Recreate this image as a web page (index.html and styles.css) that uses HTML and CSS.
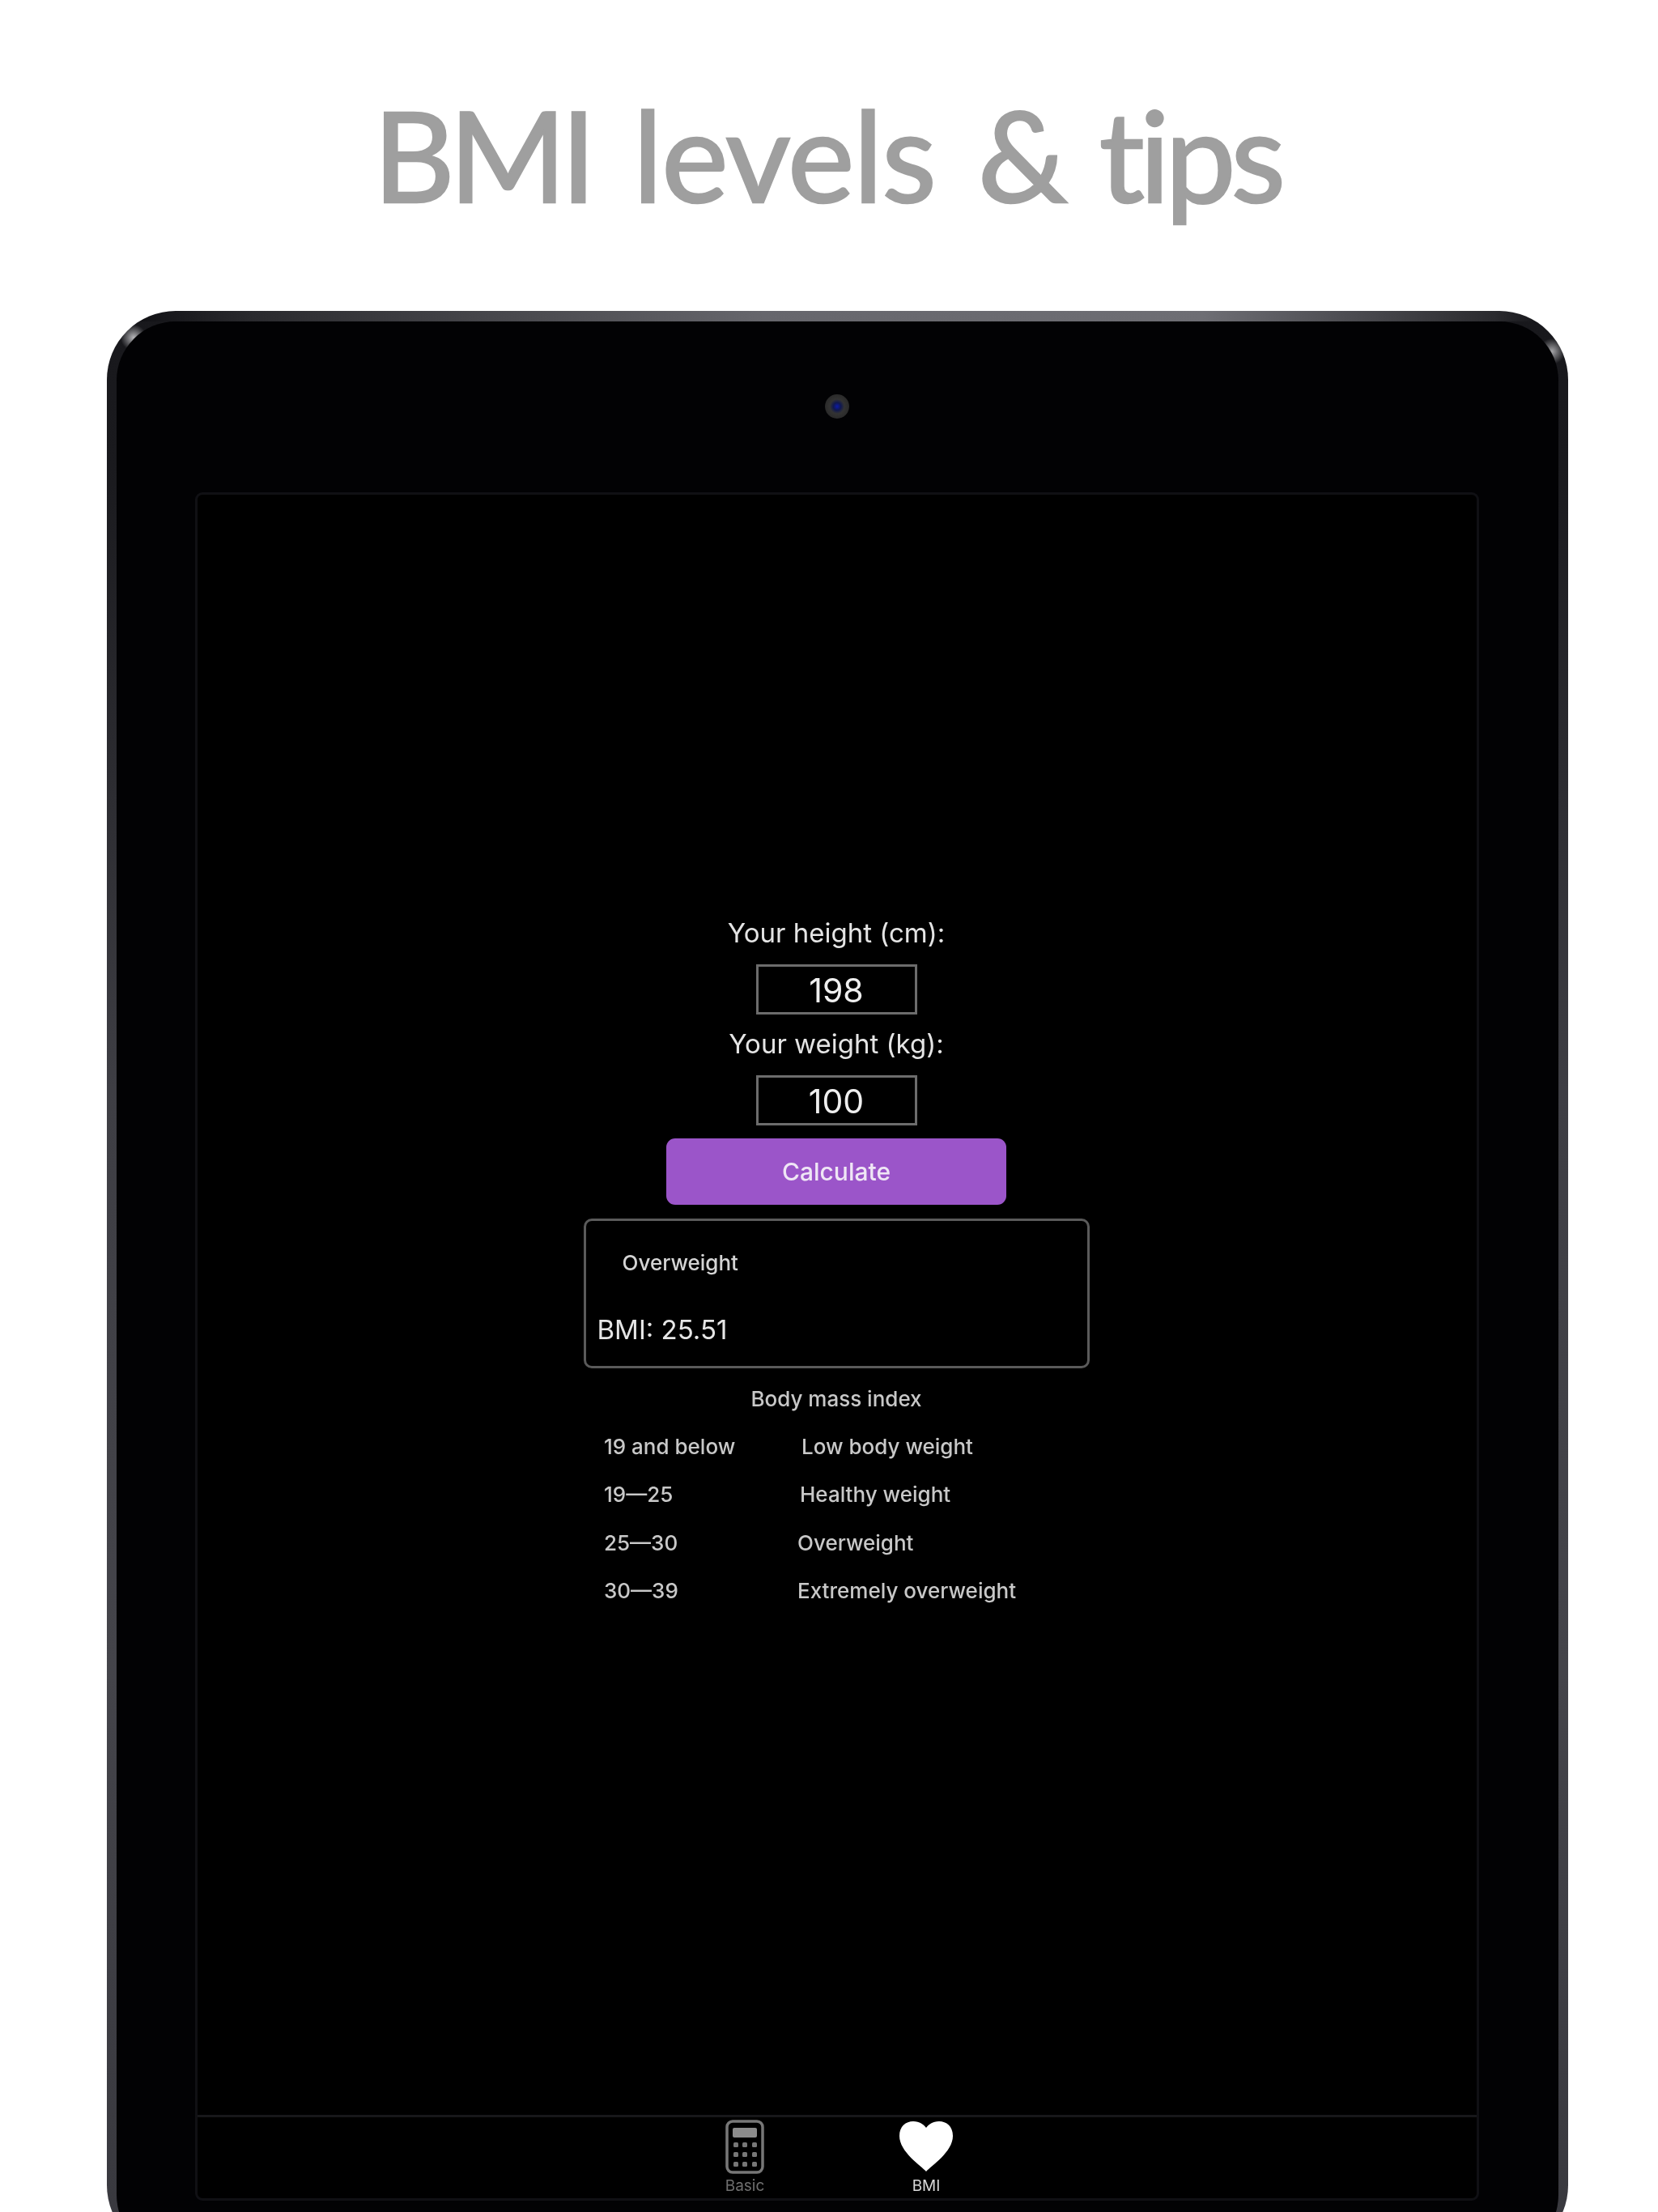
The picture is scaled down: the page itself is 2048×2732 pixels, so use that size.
FILE: index.html
```html
<!DOCTYPE html>
<html lang="en">
<head>
<meta charset="utf-8">
<title>BMI levels &amp; tips</title>
<link rel="stylesheet" href="styles.css">
</head>
<body>
<header class="promo"><h1 class="promo-title"><span class="promo-bmi">BMI</span> levels &amp; <span class="promo-tips">tips</span></h1></header>
<div class="device">
  <div class="device-face">
    <div class="camera"></div>
    <div class="screen">
      <main class="app">
        <label class="field-label">Your height (cm):</label>
        <div class="field-input">198</div>
        <label class="field-label field-label-next">Your weight (kg):</label>
        <div class="field-input">100</div>
        <button class="calc-btn" type="button">Calculate</button>
        <section class="result">
          <div class="result-status">Overweight</div>
          <div class="result-value">BMI: 25.51</div>
        </section>
        <h2 class="index-title">Body mass index</h2>
        <div class="index-table">
          <div class="index-row"><span class="index-range">19 and below</span><span class="index-name">Low body weight</span></div>
          <div class="index-row"><span class="index-range">19—25</span><span class="index-name index-name-b">Healthy weight</span></div>
          <div class="index-row"><span class="index-range">25—30</span><span class="index-name index-name-c">Overweight</span></div>
          <div class="index-row"><span class="index-range">30—39</span><span class="index-name index-name-c">Extremely overweight</span></div>
        </div>
      </main>
      <nav class="tabbar">
        <div class="tab">
          <svg class="tab-icon" width="48" height="67" viewBox="0 0 48 67" aria-hidden="true">
            <rect x="2" y="2" width="44" height="63" rx="7" fill="none" stroke="#777" stroke-width="3.5"/>
            <rect x="9" y="10" width="30" height="12" rx="2" fill="#8c8c8c"/>
            <g fill="#777">
              <rect x="10" y="28" width="6" height="6" rx="1.5"/><rect x="21" y="28" width="6" height="6" rx="1.5"/><rect x="33" y="28" width="6" height="6" rx="1.5"/>
              <rect x="10" y="40" width="6" height="6" rx="1.5"/><rect x="21" y="40" width="6" height="6" rx="1.5"/><rect x="33" y="40" width="6" height="6" rx="1.5"/>
              <rect x="10" y="52" width="6" height="6" rx="1.5"/><rect x="21" y="52" width="6" height="6" rx="1.5"/><rect x="33" y="52" width="6" height="6" rx="1.5"/>
            </g>
          </svg>
          <span class="tab-label">Basic</span>
        </div>
        <div class="tab tab-active">
          <svg class="tab-icon" width="66" height="67" viewBox="0 0 66 67" aria-hidden="true">
            <path d="M33 64C27 57 0 40 0 20C0 8 8 2 17 2C25 2 30 6 33 10C36 6 41 2 49 2C58 2 66 8 66 20C66 40 39 57 33 64Z" fill="#fff"/>
          </svg>
          <span class="tab-label">BMI</span>
        </div>
      </nav>
    </div>
  </div>
</div>
</body>
</html>
```

FILE: styles.css
```css
html, body {
  margin: 0;
  padding: 0;
  background: #fff;
  height: 2732px;
  overflow: hidden;
}

body {
  font-family: Inter, "Liberation Sans", sans-serif;
}

.promo {
  height: 384px;
  box-sizing: border-box;
  padding-top: 95px;
  padding-left: 461px;
}

.promo-title {
  margin: 0;
  font-family: Lato, "Liberation Sans", sans-serif;
  font-weight: 400;
  font-size: 156px;
  line-height: 190px;
  letter-spacing: -1.5px;
  word-spacing: 14px;
  -webkit-text-stroke: 2.5px #9f9f9f;
  color: #9f9f9f;
  white-space: nowrap;
}

.promo-bmi {
  letter-spacing: -7px;
}

.promo-tips {
  margin-left: -12px;
  letter-spacing: -6px;
}

.device {
  position: relative;
  box-sizing: border-box;
  width: 1805px;
  height: 2400px;
  margin-left: 132px;
  padding: 13px 12px 0;
  border-radius: 85px;
  background:
    radial-gradient(circle 16px at 33px 33px, #b5b5b8 0, rgba(181,181,184,0) 100%),
    radial-gradient(circle 16px at calc(100% - 20px) 50px, #a5a5a8 0, rgba(165,165,168,0) 100%),
    linear-gradient(90deg, #0a0a0e 0, #2a2a2e 10%, #66666c 45%, #6e6e74 75%, #2a2a2e 95%, #0a0a0e 100%) top / 100% 13px no-repeat,
    linear-gradient(180deg, #18181c 0, #1a1a1e 8%, #3e3e44 40%, #44444a 70%, #38383e 100%);
}

.device-face {
  box-sizing: border-box;
  height: 100%;
  border-radius: 73px;
  background: #020204;
  padding-top: 90px;
}

.camera {
  width: 30px;
  height: 30px;
  margin: 0 auto;
  transform: translateX(-1px);
  border-radius: 50%;
  background: radial-gradient(circle, #0d1aa8 0, #10184f 22%, #333 42%, #2a2a2a 70%, #0a0a0a 100%);
}

.screen {
  box-sizing: border-box;
  width: 1586px;
  height: 2110px;
  margin: 91px 0 0 97px;
  display: flex;
  flex-direction: column;
  background: #000;
  border: 3px solid #101014;
  border-radius: 9px;
}

.app {
  flex: 1;
  display: flex;
  flex-direction: column;
  align-items: center;
  padding-top: 519px;
  padding-right: 2px;
  color: #e2e2e2;
  filter: blur(0.6px);
}

.field-label {
  height: 44px;
  line-height: 44px;
  font-size: 33px;
  color: #e4e4e4;
}

.field-label-next {
  margin-top: 14px;
}

.field-input {
  box-sizing: border-box;
  width: 199px;
  height: 62px;
  margin-top: 17px;
  border: 3px solid #6c6c6c;
  background: #000;
  text-align: center;
  font-size: 41px;
  line-height: 58px;
  color: #efefef;
}

.calc-btn {
  width: 420px;
  height: 82px;
  margin-top: 16px;
  padding: 0;
  border: 0;
  border-radius: 11px;
  background: #9b55c9;
  color: #efe6f5;
  font: 500 30px Inter, "Liberation Sans", sans-serif;
}

.result {
  box-sizing: border-box;
  width: 625px;
  height: 185px;
  margin-top: 17px;
  padding: 32px 14px 0;
  border: 3px solid #5a5a5a;
  border-radius: 10px;
}

.result-status {
  padding-left: 31px;
  font-size: 26px;
  font-weight: 500;
  line-height: 40px;
  color: #d4d4d4;
}

.result-value {
  margin-top: 42px;
  font-size: 33px;
  line-height: 40px;
  color: #e6e6e6;
}

.index-title {
  margin: 21px 0 0;
  font-weight: 500;
  font-size: 26px;
  line-height: 34px;
  color: #c8c8c8;
}

.index-table {
  width: 616px;
  margin-top: 25px;
  display: flex;
  flex-direction: column;
  gap: 25.4px;
  padding-left: 21px;
  box-sizing: border-box;
}

.index-row {
  display: flex;
  height: 34px;
  line-height: 34px;
  font-size: 26px;
  font-weight: 500;
  color: #c8c8c8;
  white-space: nowrap;
}

.index-range {
  width: 244px;
}

.index-name-b {
  margin-left: -2px;
}

.index-name-c {
  margin-left: -5px;
}

.tabbar {
  height: 100px;
  display: flex;
  justify-content: center;
  padding-right: 4px;
  border-top: 3px solid #17171a;
}

.tab {
  width: 224px;
  display: flex;
  flex-direction: column;
  align-items: center;
  color: #6f6f6f;
  filter: blur(0.5px);
}

.tab-active {
  color: #d8d8d8;
}

.tab-icon {
  display: block;
  margin-top: 3px;
}

.tab-label {
  font-size: 19px;
  line-height: 24px;
  margin-top: 3px;
}
```
